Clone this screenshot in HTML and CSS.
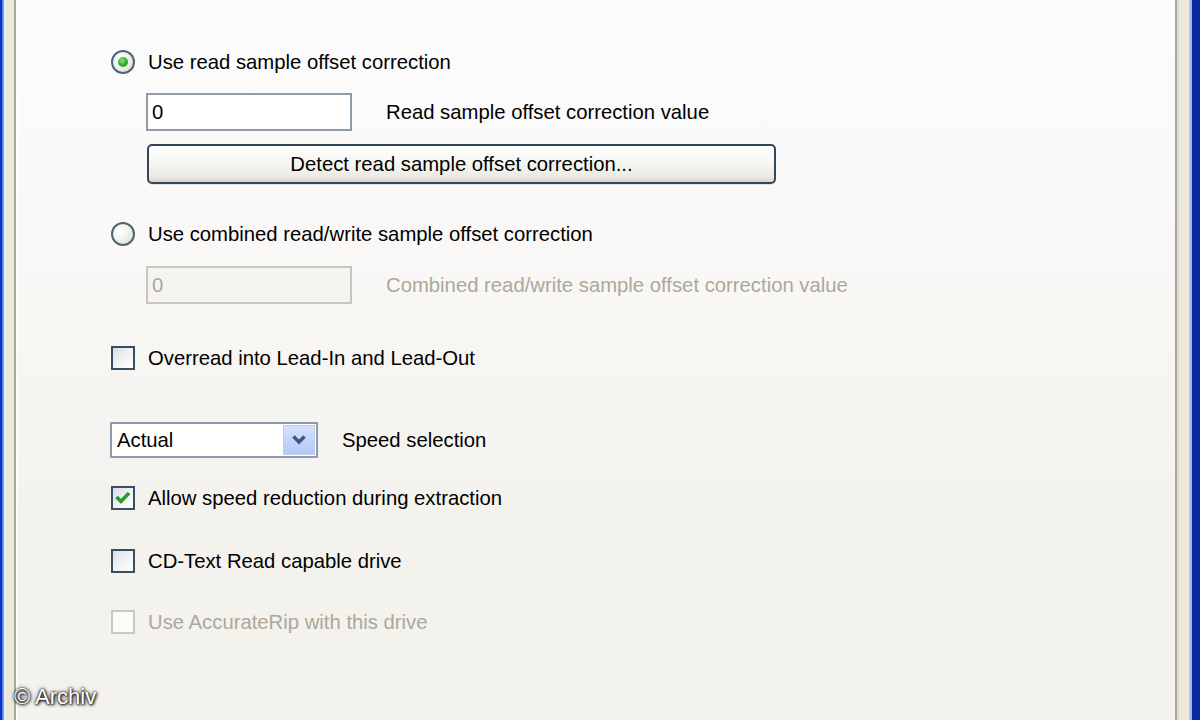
FILE: index.html
```html
<!DOCTYPE html>
<html>
<head>
<meta charset="utf-8">
<link rel="stylesheet" href="styles.css">
</head>
<body>
<div class="window">
  <div class="dialog">
    <div class="tabpanel">
      <div class="content">
        <div class="row r1">
          <span class="radio checked"></span>
          <span class="label">Use read sample offset correction</span>
        </div>
        <div class="row r2 indent">
          <div class="textfield">0</div>
          <span class="label field-label">Read sample offset correction value</span>
        </div>
        <div class="row r3 indent">
          <div class="button">Detect read sample offset correction...</div>
        </div>
        <div class="row r4">
          <span class="radio"></span>
          <span class="label">Use combined read/write sample offset correction</span>
        </div>
        <div class="row r5 indent">
          <div class="textfield disabled">0</div>
          <span class="label field-label disabled-text">Combined read/write sample offset correction value</span>
        </div>
        <div class="row r6">
          <span class="checkbox"></span>
          <span class="label">Overread into Lead-In and Lead-Out</span>
        </div>
        <div class="row r7">
          <div class="combo">
            <span class="combo-value">Actual</span>
            <span class="combo-btn">
              <svg width="18" height="14" viewBox="0 0 18 14"><path d="M3.5 3.5 L9 9 L14.5 3.5" fill="none" stroke="#3f5582" stroke-width="3.4"/></svg>
            </span>
          </div>
          <span class="label combo-label">Speed selection</span>
        </div>
        <div class="row r8">
          <span class="checkbox">
            <svg width="20" height="20" viewBox="0 0 20 20"><path d="M3.5 9 L8 13.5 L16 5" fill="none" stroke="#21a121" stroke-width="3.6"/></svg>
          </span>
          <span class="label">Allow speed reduction during extraction</span>
        </div>
        <div class="row r9">
          <span class="checkbox"></span>
          <span class="label">CD-Text Read capable drive</span>
        </div>
        <div class="row r10">
          <span class="checkbox disabled"></span>
          <span class="label disabled-text">Use AccurateRip with this drive</span>
        </div>
      </div>
    </div>
  </div>
  <div class="watermark">© Archiv</div>
</div>
</body>
</html>
```

FILE: styles.css
```css
* { box-sizing: border-box; }
html, body { margin: 0; padding: 0; }
body {
  width: 1200px;
  height: 720px;
  overflow: hidden;
  font-family: "Liberation Sans", Arial, sans-serif;
  font-size: 20.3px;
  color: #000;
}
.window {
  position: relative;
  width: 1200px;
  height: 720px;
  display: flex;
  background: linear-gradient(to right, #0b32c4 0, #0b32c4 2px, #3f6fe4 2px, #8fb0f4 4px, #e3eaf9 4px, #e3eaf9 6px, transparent 6px),
              linear-gradient(to left, #0a2a9a 0, #0a2a9a 8px, #8eaaf0 8px, #b7cbf6 11px, transparent 11px);
  padding: 0 11px 0 6px;
}
.dialog {
  flex: 1;
  display: flex;
  background: #ece9d8;
  padding: 0 10px 0 8px;
}
.tabpanel {
  flex: 1;
  display: flex;
  border-left: 2px solid #a9a89e;
  border-right: 2px solid #dcdbd3;
}
.content {
  flex: 1;
  border-left: 2px solid #fdfdfb;
  border-right: 2px solid #a6a7a0;
  background: linear-gradient(#fcfcfe 0, #f9f8f6 260px, #f4f2ed 520px, #f4f2ed 100%);
  padding: 50px 0 0 93px;
  display: flex;
  flex-direction: column;
  align-items: flex-start;
}
.row {
  display: flex;
  align-items: center;
}
.indent { margin-left: 35px; }
.r2 { margin-top: 19px; }
.r3 { margin-top: 13px; margin-left: 36px; }
.r4 { margin-top: 38px; }
.r5 { margin-top: 20px; }
.r6 { margin-top: 42px; }
.r7 { margin-top: 52px; margin-left: -1px; }
.r8 { margin-top: 28px; }
.r9 { margin-top: 39px; }
.r10 { margin-top: 37px; }

.label { white-space: nowrap; line-height: 24px; }
.radio + .label, .checkbox + .label { margin-left: 13px; }
.field-label { margin-left: 34px; }
.combo-label { margin-left: 24px; }
.disabled-text { color: #aca899; }

.radio {
  width: 24px;
  height: 24px;
  border-radius: 50%;
  border: 2px solid #4e6577;
  background: radial-gradient(circle at 35% 35%, #ffffff 0, #f4f4f0 40%, #d9d8d0 100%);
  display: flex;
  align-items: center;
  justify-content: center;
  flex: none;
}
.radio.checked::after {
  content: "";
  width: 10px;
  height: 10px;
  border-radius: 50%;
  background: radial-gradient(circle at 40% 35%, #8ee08e 0, #2fb12f 50%, #1a8a1a 100%);
}

.checkbox {
  width: 24px;
  height: 24px;
  border: 2px solid #3a4e62;
  background: linear-gradient(135deg, #d9dce6 0, #eef0f2 45%, #ffffff 100%);
  display: flex;
  align-items: center;
  justify-content: center;
  flex: none;
}
.checkbox.disabled {
  border-color: #cbc9bd;
  background: #fbfbf9;
}

.textfield {
  width: 206px;
  height: 38px;
  border: 2px solid #8e9ba8;
  background: #fff;
  padding: 0 4px;
  display: flex;
  align-items: center;
}
.textfield.disabled {
  border-color: #c8c7bd;
  background: #f5f4f0;
  color: #aca899;
}

.button {
  width: 629px;
  height: 40px;
  border: 2px solid #33475b;
  border-radius: 5px;
  background: linear-gradient(#ffffff 0, #f6f6f2 50%, #ebeae3 85%, #d6d4c9 100%);
  display: flex;
  align-items: center;
  justify-content: center;
  box-shadow: 0 1px 0 #e6e4da;
}

.combo {
  width: 208px;
  height: 36px;
  border: 2px solid #8e9ba8;
  background: #fff;
  display: flex;
  align-items: center;
  justify-content: space-between;
  padding: 0 1px 0 5px;
}
.combo-btn {
  width: 32px;
  height: 30px;
  background: linear-gradient(#d4e1fc, #b5c9f6);
  border: 1px solid #bccdf3;
  display: flex;
  align-items: center;
  justify-content: center;
}

.watermark {
  position: absolute;
  left: 14px;
  top: 684px;
  color: #fff;
  font-size: 22px;
  line-height: 26px;
  text-shadow: 0 0 2px #000, 1px 1px 3px #000, 0 0 4px rgba(0,0,0,0.7);
}
```
